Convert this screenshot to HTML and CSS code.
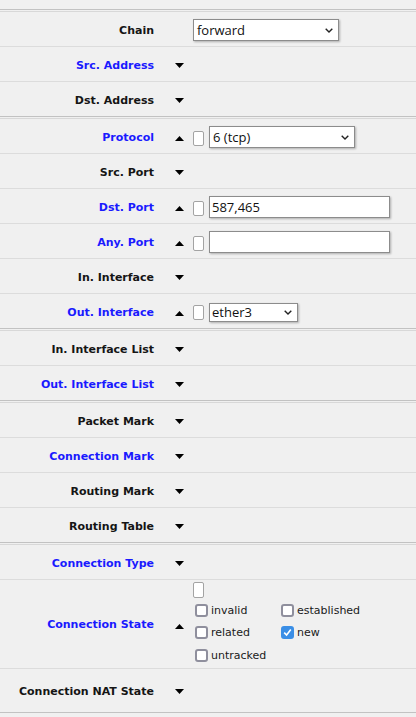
FILE: index.html
```html
<!DOCTYPE html>
<html>
<head>
<meta charset="utf-8">
<link rel="stylesheet" href="styles.css">
</head>
<body>
<div class="top"></div>

<div class="group">
  <div class="row">
    <div class="label">Chain</div>
    <span class="arrow none"></span>
    <div class="ctrl">
      <div class="select w146 h22"><span>forward</span><svg class="chev" width="8" height="5" viewBox="0 0 8 5"><polyline points="0.7,0.7 4,4 7.3,0.7" fill="none" stroke="#222" stroke-width="1.4"/></svg></div>
    </div>
  </div>
  <div class="row">
    <div class="label blue">Src. Address</div>
    <svg class="arrow" width="9" height="5" viewBox="0 0 9 5"><polygon points="0,0 9,0 4.5,5" fill="#000"/></svg>
  </div>
  <div class="row">
    <div class="label">Dst. Address</div>
    <svg class="arrow" width="9" height="5" viewBox="0 0 9 5"><polygon points="0,0 9,0 4.5,5" fill="#000"/></svg>
  </div>
</div>

<div class="group">
  <div class="row">
    <div class="label blue">Protocol</div>
    <svg class="arrow up" width="9" height="5" viewBox="0 0 9 5"><polygon points="0,5 9,5 4.5,0" fill="#000"/></svg>
    <div class="ctrl">
      <span class="box"></span>
      <div class="select w146 h22"><span>6 (tcp)</span><svg class="chev" width="8" height="5" viewBox="0 0 8 5"><polyline points="0.7,0.7 4,4 7.3,0.7" fill="none" stroke="#222" stroke-width="1.4"/></svg></div>
    </div>
  </div>
  <div class="row">
    <div class="label">Src. Port</div>
    <svg class="arrow" width="9" height="5" viewBox="0 0 9 5"><polygon points="0,0 9,0 4.5,5" fill="#000"/></svg>
  </div>
  <div class="row">
    <div class="label blue">Dst. Port</div>
    <svg class="arrow up" width="9" height="5" viewBox="0 0 9 5"><polygon points="0,5 9,5 4.5,0" fill="#000"/></svg>
    <div class="ctrl">
      <span class="box"></span>
      <input class="text" type="text" value="587,465">
    </div>
  </div>
  <div class="row">
    <div class="label blue">Any. Port</div>
    <svg class="arrow up" width="9" height="5" viewBox="0 0 9 5"><polygon points="0,5 9,5 4.5,0" fill="#000"/></svg>
    <div class="ctrl">
      <span class="box"></span>
      <input class="text" type="text" value="">
    </div>
  </div>
  <div class="row">
    <div class="label">In. Interface</div>
    <svg class="arrow" width="9" height="5" viewBox="0 0 9 5"><polygon points="0,0 9,0 4.5,5" fill="#000"/></svg>
  </div>
  <div class="row">
    <div class="label blue">Out. Interface</div>
    <svg class="arrow up" width="9" height="5" viewBox="0 0 9 5"><polygon points="0,5 9,5 4.5,0" fill="#000"/></svg>
    <div class="ctrl">
      <span class="box"></span>
      <div class="select w89 h19"><span>ether3</span><svg class="chev" width="8" height="5" viewBox="0 0 8 5"><polyline points="0.7,0.7 4,4 7.3,0.7" fill="none" stroke="#222" stroke-width="1.4"/></svg></div>
    </div>
  </div>
</div>

<div class="group">
  <div class="row">
    <div class="label">In. Interface List</div>
    <svg class="arrow" width="9" height="5" viewBox="0 0 9 5"><polygon points="0,0 9,0 4.5,5" fill="#000"/></svg>
  </div>
  <div class="row">
    <div class="label blue">Out. Interface List</div>
    <svg class="arrow" width="9" height="5" viewBox="0 0 9 5"><polygon points="0,0 9,0 4.5,5" fill="#000"/></svg>
  </div>
</div>

<div class="group">
  <div class="row">
    <div class="label">Packet Mark</div>
    <svg class="arrow" width="9" height="5" viewBox="0 0 9 5"><polygon points="0,0 9,0 4.5,5" fill="#000"/></svg>
  </div>
  <div class="row">
    <div class="label blue">Connection Mark</div>
    <svg class="arrow" width="9" height="5" viewBox="0 0 9 5"><polygon points="0,0 9,0 4.5,5" fill="#000"/></svg>
  </div>
  <div class="row">
    <div class="label">Routing Mark</div>
    <svg class="arrow" width="9" height="5" viewBox="0 0 9 5"><polygon points="0,0 9,0 4.5,5" fill="#000"/></svg>
  </div>
  <div class="row">
    <div class="label">Routing Table</div>
    <svg class="arrow" width="9" height="5" viewBox="0 0 9 5"><polygon points="0,0 9,0 4.5,5" fill="#000"/></svg>
  </div>
</div>

<div class="group">
  <div class="row">
    <div class="label blue">Connection Type</div>
    <svg class="arrow" width="9" height="5" viewBox="0 0 9 5"><polygon points="0,0 9,0 4.5,5" fill="#000"/></svg>
  </div>
  <div class="row tall">
    <div class="label blue">Connection State</div>
    <svg class="arrow up" width="9" height="5" viewBox="0 0 9 5"><polygon points="0,5 9,5 4.5,0" fill="#000"/></svg>
    <div class="ctrl states">
      <span class="box big"></span>
      <div class="checks">
        <label class="opt"><span class="cb"></span>invalid</label>
        <label class="opt"><span class="cb"></span>established</label>
        <label class="opt"><span class="cb"></span>related</label>
        <label class="opt"><span class="cb on"><svg width="9" height="9" viewBox="0 0 9 9"><polyline points="1.2,4.6 3.6,7 7.8,1.6" fill="none" stroke="#fff" stroke-width="1.6"/></svg></span>new</label>
        <label class="opt"><span class="cb"></span>untracked</label>
      </div>
    </div>
  </div>
  <div class="row nat">
    <div class="label">Connection NAT State</div>
    <svg class="arrow" width="9" height="5" viewBox="0 0 9 5"><polygon points="0,0 9,0 4.5,5" fill="#000"/></svg>
  </div>
</div>
</body>
</html>
```

FILE: styles.css
```css
html, body {
  margin: 0;
  padding: 0;
  background: #f0f0f0;
}

body {
  font-family: "DejaVu Sans", Verdana, sans-serif;
  color: #111;
}

.top {
  height: 9px;
  border-bottom: 1px solid #c2c2c2;
}

.group {
  margin-top: 1px;
  border-top: 1px solid #d8d8d8;
}

.row {
  display: flex;
  align-items: center;
  height: 32px;
  padding-top: 2px;
  border-bottom: 1px solid #dcdcdc;
}

.group .row:last-child {
  border-bottom-color: #c2c2c2;
}

.row.tall {
  height: 87px;
  padding-top: 1px;
}

.row.nat {
  height: 41px;
}

.label {
  flex: none;
  width: 154px;
  text-align: right;
  font-weight: bold;
  font-size: 11px;
  color: #151515;
  white-space: nowrap;
}

.label.blue {
  color: #1a1aff;
}

.arrow {
  flex: none;
  display: block;
  width: 9px;
  height: 5px;
  margin-left: 21px;
}

.arrow.up {
  margin-top: 3px;
}

.ctrl {
  margin-left: 9px;
  display: flex;
  align-items: flex-end;
  gap: 5px;
}

.box {
  display: block;
  width: 11px;
  height: 15px;
  box-sizing: border-box;
  border: 1px solid #a3a3a3;
  border-radius: 2px;
  background: #fff;
  margin-bottom: 2px;
}

.box.big {
  height: 16px;
  margin-bottom: 0;
}

.select {
  box-sizing: border-box;
  display: flex;
  align-items: center;
  justify-content: space-between;
  border: 1px solid #8c8c8c;
  background: #fff;
  box-shadow: 1px 1px 2px rgba(0, 0, 0, 0.28);
  padding: 0 5px 0 3px;
  font-family: "Open Sans", "Noto Sans", sans-serif;
  font-size: 13px;
  color: #111;
}

.w146 { width: 146px; }
.w89 { width: 89px; }
.h22 { height: 22px; }
.h19 { height: 19px; padding-left: 2px; }

.chev {
  flex: none;
  display: block;
}

.text {
  box-sizing: border-box;
  width: 181px;
  height: 22px;
  margin: 0;
  border: 1px solid #8c8c8c;
  border-radius: 0;
  background: #fff;
  box-shadow: 1px 1px 2px rgba(0, 0, 0, 0.28);
  padding: 0 2px;
  font-family: "Open Sans", "Noto Sans", sans-serif;
  font-size: 13px;
  color: #111;
  outline: none;
}

.states {
  align-self: flex-start;
  margin-top: 1px;
  flex-direction: column;
  align-items: flex-start;
  gap: 0;
}

.checks {
  display: grid;
  grid-template-columns: 86px auto;
  grid-auto-rows: 22.5px;
  margin-top: 1px;
  margin-left: 2px;
}

.opt {
  display: flex;
  align-items: center;
  gap: 3px;
  font-size: 11px;
  color: #1a1a1a;
}

.cb {
  display: flex;
  align-items: center;
  justify-content: center;
  width: 13px;
  height: 13px;
  box-sizing: border-box;
  border: 2px solid #8f8f9d;
  border-radius: 3px;
  background: #fff;
}

.cb.on {
  background: #3a8ee6;
  border-color: #3a8ee6;
}
```
